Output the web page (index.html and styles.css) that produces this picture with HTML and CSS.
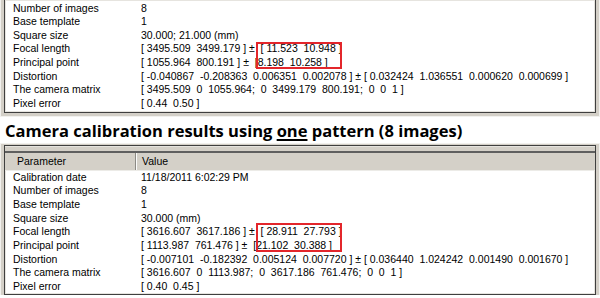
FILE: index.html
```html
<!DOCTYPE html>
<html lang="en">
<head>
    <meta charset="UTF-8">
    <title>Camera calibration results</title>
    <link rel="stylesheet" href="styles.css">
</head>
<body>
    <!-- Results list, scrolled so the first rows are hidden -->
    <div class="frame frame-top">
        <div class="list">
            <div class="row"><span class="key">Number of images</span><span class="val">8</span></div>
            <div class="row"><span class="key">Base template</span><span class="val">1</span></div>
            <div class="row"><span class="key">Square size</span><span class="val">30.000; 21.000 (mm)</span></div>
            <div class="row"><span class="key">Focal length</span><span class="val">[ 3495.509  3499.179 ] ±  [ 11.523  10.948 ]</span></div>
            <div class="row"><span class="key">Principal point</span><span class="val">[ 1055.964  800.191 ] ±  [8.198  10.258 ]</span></div>
            <div class="row"><span class="key">Distortion</span><span class="val">[ -0.040867  -0.208363  0.006351  0.002078 ] ± [ 0.032424  1.036551  0.000620  0.000699 ]</span></div>
            <div class="row"><span class="key">The camera matrix</span><span class="val">[ 3495.509  0  1055.964;  0  3499.179  800.191;  0  0  1 ]</span></div>
            <div class="row"><span class="key">Pixel error</span><span class="val">[ 0.44  0.50 ]</span></div>
            <div class="mark mark-top"></div>
        </div>
    </div>

    <h2 class="caption">Camera calibration results using <u>one</u> pattern (8 images)</h2>

    <div class="frame frame-bottom">
        <div class="list">
            <div class="head">
                <div class="head-row">
                    <span class="hcell hkey">Parameter</span>
                    <span class="hcell hval">Value</span>
                </div>
            </div>
            <div class="row"><span class="key">Calibration date</span><span class="val">11/18/2011 6:02:29 PM</span></div>
            <div class="row"><span class="key">Number of images</span><span class="val">8</span></div>
            <div class="row"><span class="key">Base template</span><span class="val">1</span></div>
            <div class="row"><span class="key">Square size</span><span class="val">30.000 (mm)</span></div>
            <div class="row"><span class="key">Focal length</span><span class="val">[ 3616.607  3617.186 ] ±  [ 28.911  27.793 ]</span></div>
            <div class="row"><span class="key">Principal point</span><span class="val">[ 1113.987  761.476 ] ±  [21.102  30.388 ]</span></div>
            <div class="row"><span class="key">Distortion</span><span class="val">[ -0.007101  -0.182392  0.005124  0.007720 ] ± [ 0.036440  1.024242  0.001490  0.001670 ]</span></div>
            <div class="row"><span class="key">The camera matrix</span><span class="val">[ 3616.607  0  1113.987;  0  3617.186  761.476;  0  0  1 ]</span></div>
            <div class="row"><span class="key">Pixel error</span><span class="val">[ 0.40  0.45 ]</span></div>
            <div class="mark mark-bottom"></div>
        </div>
    </div>
</body>
</html>
```

FILE: styles.css
```css
body {
    margin: 0;
    background: #fff;
    color: #000;
    font-family: 'Liberation Sans', Arial, sans-serif;
    font-size: 10.5px;
    overflow: hidden;
    height: 298px;
}

/* Grey window frame around each list */
.frame {
    background-color: #d4d0c8;
    border-left: 1px solid #f2f1ee;
    border-right: 1px solid #f2f1ee;
    padding: 0 3px;
}

.frame-top {
    padding-bottom: 3px;
    border-bottom: 1px solid #f2f1ee;
}

.frame-bottom {
    padding-top: 1px;
    border-top: 1px solid #f2f1ee;
}

.list {
    position: relative;
    background-color: #fff;
    border: 1px solid #3f3f3f;
    box-shadow: inset 1px 1px 0 #e6e4df, inset -1px -1px 0 #e6e4df;
}

.frame-top .list {
    border-top: none;
    padding: 1.5px 0 1px;
}

/* Rows */
.row {
    display: grid;
    grid-template-columns: 128px 1fr;
    padding-left: 8px;
    height: 13.67px;
    line-height: 13.67px;
    white-space: pre;
}

.val {
    overflow: hidden;
}

/* Column header */
.head {
    background-color: #d4d0c8;
    padding-top: 4px;
    border-top: 1px solid #e6e4df;
}

.head-row {
    display: grid;
    grid-template-columns: 131px 1fr;
    height: 17px;
    line-height: 17px;
    border-top: 2px solid #5f5f5f;
    border-bottom: 1px solid #ecebe7;
}

.hcell {
    padding-left: 12px;
}

.hkey {
    border-right: 1px solid #8c8a85;
}

.hval {
    border-left: 1px solid #fbfbfa;
    padding-left: 5px;
}

/* Red highlight boxes */
.mark {
    position: absolute;
    left: 251px;
    width: 86px;
    border: 2px solid #e3262b;
    box-sizing: border-box;
}

.mark-top {
    top: 41.5px;
    height: 27px;
}

.mark-bottom {
    top: 77.5px;
    height: 28.5px;
}

/* Caption between the two lists */
.caption {
    margin: 0;
    height: 26px;
    padding: 3px 0 0 5px;
    box-sizing: border-box;
    font-family: 'Open Sans', sans-serif;
    font-weight: 700;
    font-size: 16.5px;
    line-height: 22px;
    color: #000;
    white-space: nowrap;
}

.caption u {
    text-decoration-thickness: 2px;
    text-underline-offset: 2px;
}
```
